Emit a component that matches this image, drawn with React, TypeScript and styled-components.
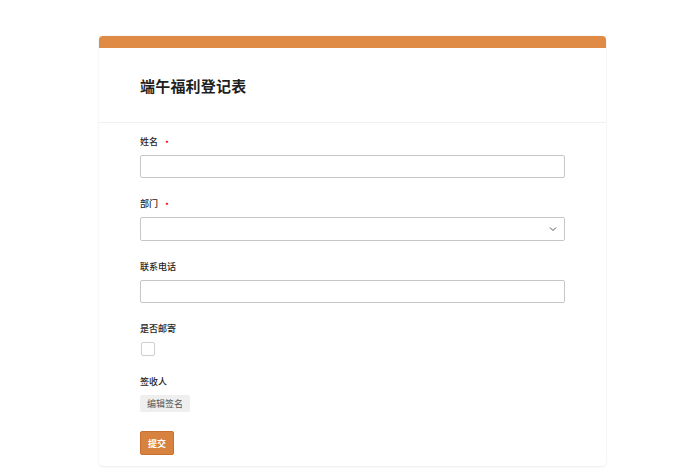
import styled, { createGlobalStyle } from "styled-components";

const GlobalStyle = createGlobalStyle`
  html, body {
    margin: 0;
    padding: 0;
    background: #ffffff;
    font-family: "Noto Sans CJK SC", "Liberation Sans", sans-serif;
  }
`;

const Page = styled.div`
  padding: 36px 0 8px 99px;
`;

const Card = styled.div`
  width: 507px;
  background: #fff;
  border-radius: 4px;
  overflow: hidden;
  box-shadow: 0 0 3px rgba(0, 0, 0, 0.08), 0 1px 2px rgba(0, 0, 0, 0.04);
`;

const TopBar = styled.div`
  height: 12px;
  background: #e08b45;
`;

const Header = styled.div`
  height: 74px;
  display: flex;
  align-items: center;
  padding: 0 41px;
  border-bottom: 1px solid #f0f0f0;
`;

const Title = styled.h1`
  margin: 0;
  font-size: 15px;
  font-weight: 600;
  color: #1f1f1f;
  letter-spacing: 0.2px;
`;

const Form = styled.form`
  display: flex;
  flex-direction: column;
  gap: 20px;
  padding: 13px 41px 11px;
`;

const Field = styled.div`
  display: flex;
  flex-direction: column;
  align-items: flex-start;
  gap: 7px;
`;

const Label = styled.label`
  display: flex;
  align-items: center;
  height: 12px;
  font-size: 9px;
  line-height: 12px;
  font-weight: 500;
  color: #262626;
`;

const Star = styled.span`
  color: #e02020;
  margin-left: 4px;
  font-size: 10px;
  line-height: 12px;
`;

const Input = styled.input`
  box-sizing: border-box;
  width: 425px;
  height: 23px;
  border: 1px solid #c6c6c6;
  border-radius: 2px;
  background: #fff;
  outline: none;
`;

const SelectBox = styled.div`
  box-sizing: border-box;
  width: 425px;
  height: 24px;
  border: 1px solid #c6c6c6;
  border-radius: 2px;
  display: flex;
  align-items: center;
  justify-content: flex-end;
  padding-right: 7px;
`;

const Check = styled.div`
  box-sizing: border-box;
  width: 14px;
  height: 14px;
  margin-left: 1px;
  border: 1px solid #cfcfcf;
  border-radius: 2px;
  background: #fff;
`;

const GhostButton = styled.button`
  height: 17px;
  padding: 0 7px;
  border: none;
  border-radius: 2px;
  background: #efefef;
  color: #555;
  font-family: inherit;
  font-size: 9px;
  line-height: 17px;
  cursor: pointer;
`;

const SubmitButton = styled.button`
  align-self: flex-start;
  margin-top: -1px;
  width: 34px;
  height: 24px;
  padding: 0;
  border: 1px solid #c96f30;
  border-radius: 2px;
  background: #d8823f;
  color: #fff;
  font-family: inherit;
  font-size: 9px;
  font-weight: 700;
  cursor: pointer;
`;

function Chevron() {
  return (
    <svg width="8" height="6" viewBox="0 0 8 6">
      <path d="M1 1.5 L4 4.5 L7 1.5" fill="none" stroke="#555" strokeWidth="1" />
    </svg>
  );
}

export default function App() {
  return (
    <>
      <GlobalStyle />
      <Page>
        <Card>
          <TopBar />
          <Header>
            <Title>端午福利登记表</Title>
          </Header>
          <Form onSubmit={(e) => e.preventDefault()}>
            <Field>
              <Label>
                姓名<Star>•</Star>
              </Label>
              <Input type="text" />
            </Field>
            <Field>
              <Label>
                部门<Star>•</Star>
              </Label>
              <SelectBox>
                <Chevron />
              </SelectBox>
            </Field>
            <Field>
              <Label>联系电话</Label>
              <Input type="text" />
            </Field>
            <Field>
              <Label>是否邮寄</Label>
              <Check />
            </Field>
            <Field>
              <Label>签收人</Label>
              <GhostButton type="button">编辑签名</GhostButton>
            </Field>
            <SubmitButton type="submit">提交</SubmitButton>
          </Form>
        </Card>
      </Page>
    </>
  );
}
